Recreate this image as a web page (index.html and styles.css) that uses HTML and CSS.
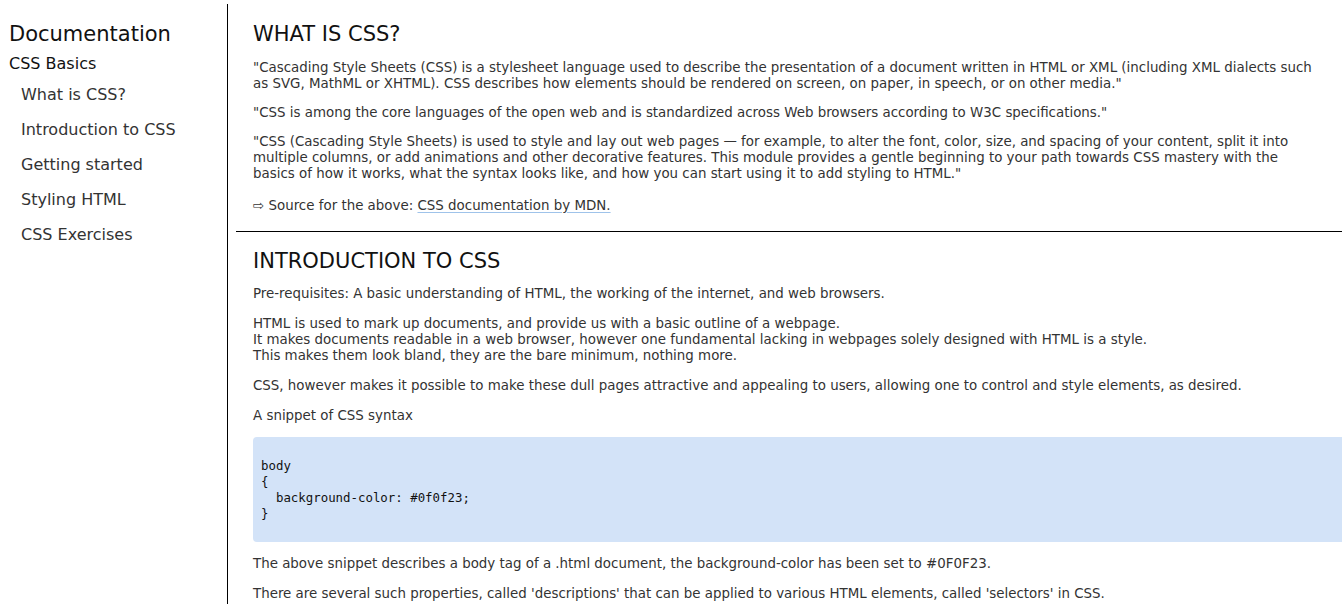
FILE: index.html
```html
<!DOCTYPE html>
<html lang="en">
<head>
<meta charset="utf-8">
<title>Documentation</title>
<link rel="stylesheet" href="styles.css">
</head>
<body>
<nav class="sidebar">
  <h1 class="doc-title">Documentation</h1>
  <h3 class="nav-group">CSS Basics</h3>
  <ul class="nav-list">
    <li><a class="nav-link" href="#what">What is CSS?</a></li>
    <li><a class="nav-link" href="#intro">Introduction to CSS</a></li>
    <li><a class="nav-link" href="#start">Getting started</a></li>
    <li><a class="nav-link" href="#styling">Styling HTML</a></li>
    <li><a class="nav-link" href="#exercises">CSS Exercises</a></li>
  </ul>
</nav>
<main class="main">
  <section class="doc-section" id="what">
    <h2 class="sec-title first">WHAT IS CSS?</h2>
    <p class="txt">"Cascading Style Sheets (CSS) is a stylesheet language used to describe the presentation of a document written in HTML or XML (including XML dialects such as SVG, MathML or XHTML). CSS describes how elements should be rendered on screen, on paper, in speech, or on other media."</p>
    <p class="txt">"CSS is among the core languages of the open web and is standardized across Web browsers according to W3C specifications."</p>
    <p class="txt">"CSS (Cascading Style Sheets) is used to style and lay out web pages — for example, to alter the font, color, size, and spacing of your content, split it into multiple columns, or add animations and other decorative features. This module provides a gentle beginning to your path towards CSS mastery with the basics of how it works, what the syntax looks like, and how you can start using it to add styling to HTML."</p>
    <p class="txt source">⇨ Source for the above: <a class="src-link" href="#">CSS documentation by MDN.</a></p>
  </section>
  <hr class="divider">
  <section class="doc-section" id="intro">
    <h2 class="sec-title">INTRODUCTION TO CSS</h2>
    <p class="txt">Pre-requisites: A basic understanding of HTML, the working of the internet, and web browsers.</p>
    <p class="txt">HTML is used to mark up documents, and provide us with a basic outline of a webpage.<br>It makes documents readable in a web browser, however one fundamental lacking in webpages solely designed with HTML is a style.<br>This makes them look bland, they are the bare minimum, nothing more.</p>
    <p class="txt">CSS, however makes it possible to make these dull pages attractive and appealing to users, allowing one to control and style elements, as desired.</p>
    <p class="txt">A snippet of CSS syntax</p>
    <pre class="code">body
{
  background-color: #0f0f23;
}</pre>
    <p class="txt">The above snippet describes a body tag of a .html document, the background-color has been set to #0F0F23.</p>
    <p class="txt">There are several such properties, called 'descriptions' that can be applied to various HTML elements, called 'selectors' in CSS.</p>
  </section>
</main>
</body>
</html>
```
FILE: styles.css
```css
html, body {
  margin: 0;
  padding: 0;
  background: #fff;
}

body {
  display: flex;
  align-items: stretch;
  min-height: 100vh;
  font-family: "DejaVu Sans", "Liberation Sans", sans-serif;
  color: #333;
  overflow: hidden;
}

.sidebar {
  flex: 0 0 auto;
  width: 218px;
  padding-left: 9px;
  margin-top: 4px;
  border-right: 1px solid #000;
}

.doc-title {
  margin: 17px 0 0;
  font-size: 21px;
  line-height: 26px;
  font-weight: normal;
  color: #111;
}

.nav-group {
  margin: 7px 0 0;
  font-size: 16px;
  line-height: 20px;
  font-weight: normal;
  color: #111;
}

.nav-list {
  list-style: none;
  margin: 3px 0 0;
  padding: 0 0 0 12px;
  font-size: 16px;
}

.nav-list li {
  height: 35px;
  line-height: 35px;
}

.nav-link {
  color: #333;
  text-decoration: none;
}

.main {
  flex: 1 1 auto;
  min-width: 0;
  padding-left: 8px;
}

.doc-section {
  padding: 0 20px 0 17px;
}

.sec-title {
  margin: 16px 0 11px;
  font-size: 21px;
  line-height: 27px;
  font-weight: normal;
  color: #111;
}

.sec-title.first {
  margin-top: 21px;
  margin-bottom: 12px;
}

.txt {
  margin: 14px 0 0;
  font-size: 13.4px;
  line-height: 16px;
}

.sec-title + .txt {
  margin-top: 0;
}

#what .txt {
  margin-top: 13px;
}

#what .sec-title + .txt {
  margin-top: 0;
}

#what .source {
  margin-top: 16px;
  margin-bottom: 17px;
}

.src-link {
  color: #333;
  text-decoration: underline;
  text-decoration-color: #9fc3ea;
  text-underline-offset: 2px;
}

.divider {
  margin: 0;
  border: 0;
  border-top: 1px solid #000;
  height: 0;
}

.code {
  margin: 13px -40px 14px 0;
  padding: 21px 8px 20px;
  background: #d3e3f8;
  border-radius: 4px;
  font-family: "DejaVu Sans Mono", "Liberation Mono", monospace;
  font-size: 12.4px;
  line-height: 16px;
  color: #111;
}

.code + .txt {
  margin-top: 0;
}
```
